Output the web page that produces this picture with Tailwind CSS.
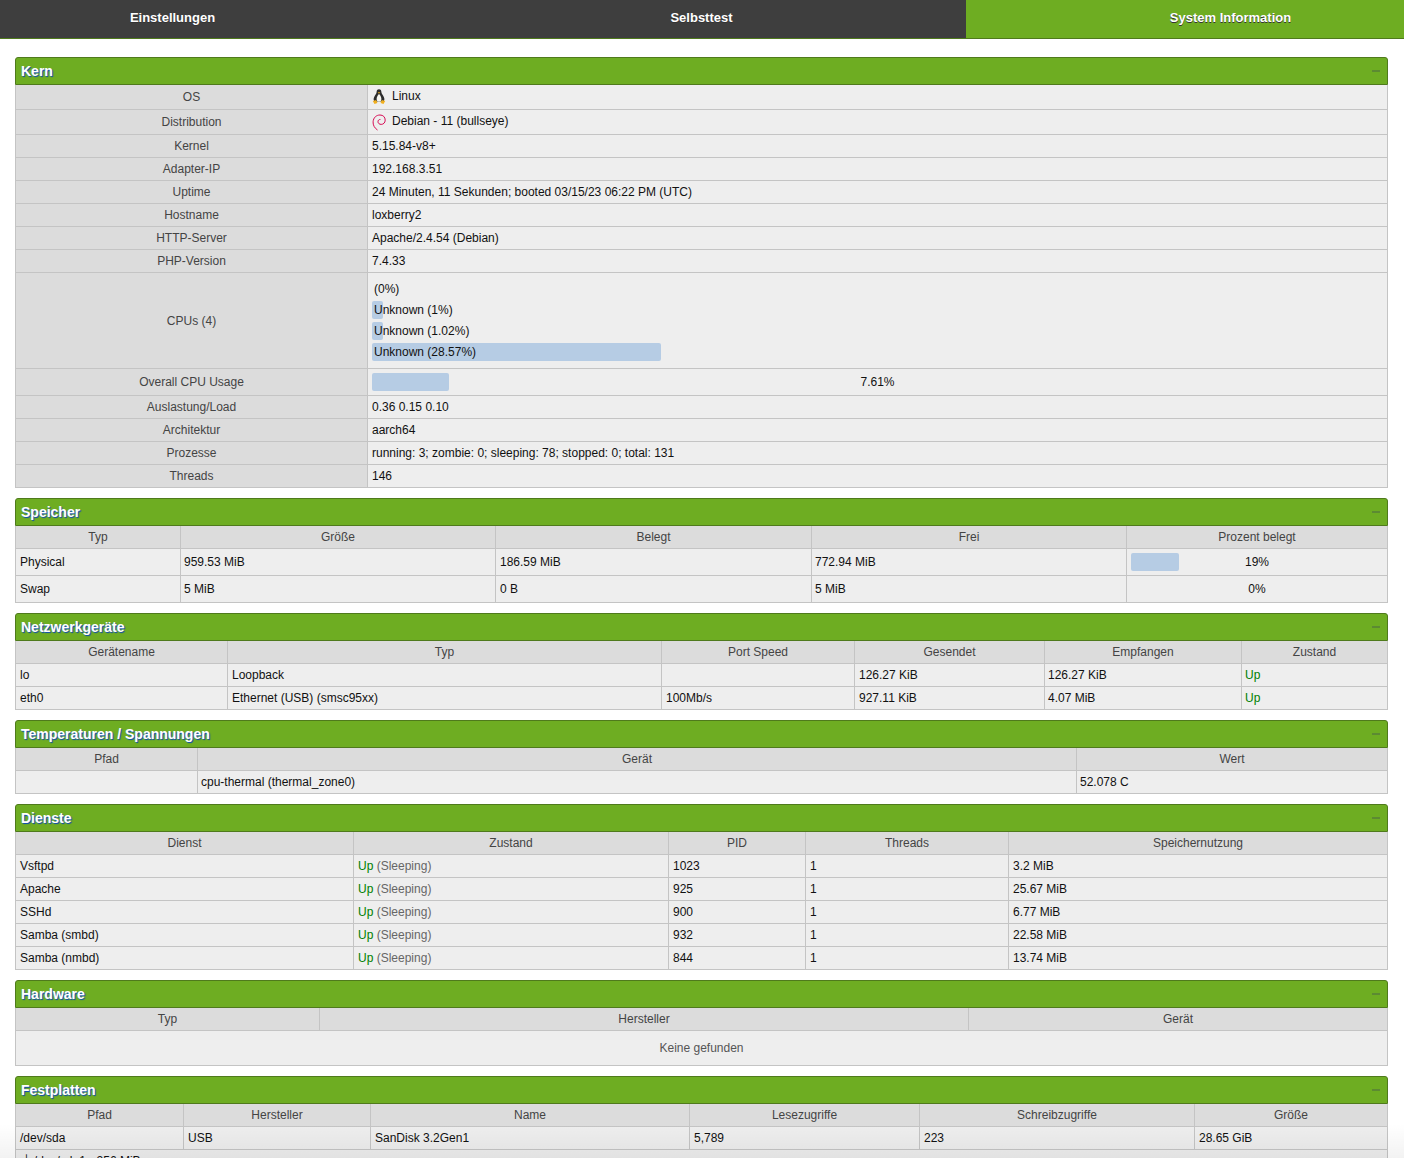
<!doctype html>
<html><head><meta charset="utf-8"><script src="https://cdn.jsdelivr.net/npm/@tailwindcss/browser@4"></script></head>
<body class="bg-white font-['Liberation_Sans',Arial,sans-serif] text-[12px] text-[#111] overflow-hidden">
<div class="relative h-[1158px] overflow-hidden">
<nav class="flex ml-[-92px] w-[1587px] h-[39px] border-b border-[#4f7a1c] text-white text-[13px] font-bold [text-shadow:0_1px_0_#333]">
<div class="w-[529px] bg-[#3e3e3e] text-center leading-[36px]">Einstellungen</div>
<div class="w-[529px] bg-[#3e3e3e] text-center leading-[36px]">Selbsttest</div>
<div class="w-[529px] bg-[#6ead22] text-center leading-[36px]">System Information</div>
</nav>
<main class="pl-[15px] pr-[16px] pt-[18px] flex flex-col gap-[10px]">

<section>
<div class="flex justify-between items-center h-[28px] bg-[#6ead22] border border-[#4f7a1c] rounded-t-[3px] pl-[5px] pr-[7px] font-bold text-[14px] text-white [text-shadow:1px_1px_1px_#0a47b8]"><span>Kern</span><span class="w-[8px] h-[2px] bg-[#5c8a32]"></span></div>
<table class="w-full table-fixed border-collapse border border-[#c4c4c4] border-t-0 [&_th]:font-normal [&_th]:text-[#444] [&_th]:bg-[#dcdcdc] [&_th]:border [&_th]:border-[#c4c4c4] [&_th]:p-0 [&_td]:bg-[#eeeeee] [&_td]:border [&_td]:border-[#c4c4c4] [&_td]:px-[4px] [&_td]:py-0">
<colgroup><col class="w-[352px]"><col></colgroup>
<tbody>
<tr class="h-[24px]"><th class="border-t-0!">OS</th><td class="border-t-0!"><span class="flex items-center gap-[6px]"><svg width="14" height="15" viewBox="0 0 14 15"><path d="M7 .3c1.700 0 2.400 1.300 2.400 2.900 0 1.700 3 4.200 3 6.800 0 1.200-.5 2-1.200 2.500H2.800C2.100 12 1.600 11.200 1.600 10c0-2.600 3-5.100 3-6.800C4.600 1.600 5.300.3 7 .3z" fill="#2c2c2c"/><path d="M7 5c.9.400 2.400 3 2.400 5 0 1.600-.8 2.600-2.400 2.600S4.600 11.600 4.600 10c0-2 1.500-4.600 2.400-5z" fill="#f6f6f0"/><path d="M.8 12.100l3.400-1 1.200 2.900-2.900.9zM13.200 12.100l-3.400-1-1.200 2.900 2.900.9zM5.700 3.300h2.600L7 4.800z" fill="#f2b01e"/></svg><span class="-translate-y-[1px]">Linux</span></span></td></tr>
<tr class="h-[25px]"><th>Distribution</th><td><span class="flex items-center gap-[6px]"><svg width="14" height="17" viewBox="0 0 14 17" fill="none" stroke="#d70a53" stroke-width="1" class="translate-y-[1px]"><path d="M5.500 16C2.400 14 .9 11 1.100 7.800 1.400 3.500 4.400 1 8 1c3.200 0 5.200 2.200 5.200 5.100 0 2.700-1.900 4.300-4 4.300C7.400 10.400 6 9.300 6 7.700 6 6.300 7 5.300 8.400 5.500"/></svg><span class="-translate-y-[1px]">Debian - 11 (bullseye)</span></span></td></tr>
<tr class="h-[23px]"><th>Kernel</th><td>5.15.84-v8+</td></tr>
<tr class="h-[23px]"><th>Adapter-IP</th><td>192.168.3.51</td></tr>
<tr class="h-[23px]"><th>Uptime</th><td>24 Minuten, 11 Sekunden; booted 03/15/23 06:22 PM (UTC)</td></tr>
<tr class="h-[23px]"><th>Hostname</th><td>loxberry2</td></tr>
<tr class="h-[23px]"><th>HTTP-Server</th><td>Apache/2.4.54 (Debian)</td></tr>
<tr class="h-[23px]"><th>PHP-Version</th><td>7.4.33</td></tr>
<tr class="h-[96px]"><th class="pt-[1px]!">CPUs (4)</th><td>
<div class="flex flex-col gap-[3px]">
<div class="h-[18px] leading-[18px] pl-[2px]">(0%)</div>
<div class="relative h-[18px] leading-[18px] pl-[2px]"><div class="absolute left-0 top-0 h-full w-[11px] bg-[#b6cce4] rounded-[2px]"></div><span class="relative">Unknown (1%)</span></div>
<div class="relative h-[18px] leading-[18px] pl-[2px]"><div class="absolute left-0 top-0 h-full w-[11px] bg-[#b6cce4] rounded-[2px]"></div><span class="relative">Unknown (1.02%)</span></div>
<div class="relative h-[18px] leading-[18px] pl-[2px]"><div class="absolute left-0 top-0 h-full w-[289px] bg-[#b6cce4] rounded-[2px]"></div><span class="relative">Unknown (28.57%)</span></div>
</div></td></tr>
<tr class="h-[27px]"><th>Overall CPU Usage</th><td><div class="relative h-[18px] w-[1011px] text-center leading-[18px]"><div class="absolute left-0 top-0 h-full w-[77px] bg-[#b6cce4] rounded-[2px]"></div><span class="relative">7.61%</span></div></td></tr>
<tr class="h-[23px]"><th>Auslastung/Load</th><td>0.36 0.15 0.10</td></tr>
<tr class="h-[23px]"><th>Architektur</th><td>aarch64</td></tr>
<tr class="h-[23px]"><th>Prozesse</th><td>running: 3; zombie: 0; sleeping: 78; stopped: 0; total: 131</td></tr>
<tr class="h-[23px]"><th>Threads</th><td>146</td></tr>
</tbody></table>
</section>

<section>
<div class="flex justify-between items-center h-[28px] bg-[#6ead22] border border-[#4f7a1c] rounded-t-[3px] pl-[5px] pr-[7px] font-bold text-[14px] text-white [text-shadow:1px_1px_1px_#0a47b8]"><span class="translate-y-[1px]">Speicher</span><span class="w-[8px] h-[2px] bg-[#5c8a32]"></span></div>
<table class="w-full table-fixed border-collapse border border-[#c4c4c4] border-t-0 [&_th]:font-normal [&_th]:text-[#444] [&_th]:bg-[#dcdcdc] [&_th]:border [&_th]:border-[#c4c4c4] [&_th]:border-t-0 [&_th]:p-0 [&_td]:bg-[#eeeeee] [&_td]:border [&_td]:border-[#c4c4c4] [&_td]:px-[4px] [&_td]:py-0">
<colgroup><col class="w-[165px]"><col class="w-[315px]"><col class="w-[316px]"><col class="w-[315px]"><col></colgroup>
<thead><tr class="h-[23px]"><th>Typ</th><th>Größe</th><th>Belegt</th><th>Frei</th><th>Prozent belegt</th></tr></thead>
<tbody>
<tr class="h-[27px]"><td>Physical</td><td class="pl-[3px]!">959.53 MiB</td><td>186.59 MiB</td><td class="pl-[3px]!">772.94 MiB</td><td><div class="relative h-[18px] text-center leading-[18px]"><div class="absolute left-0 top-0 h-full w-[48px] bg-[#b6cce4] rounded-[2px]"></div><span class="relative">19%</span></div></td></tr>
<tr class="h-[27px]"><td>Swap</td><td class="pl-[3px]!">5 MiB</td><td>0 B</td><td class="pl-[3px]!">5 MiB</td><td class="text-center">0%</td></tr>
</tbody></table>
</section>

<section>
<div class="flex justify-between items-center h-[28px] bg-[#6ead22] border border-[#4f7a1c] rounded-t-[3px] pl-[5px] pr-[7px] font-bold text-[14px] text-white [text-shadow:1px_1px_1px_#0a47b8]"><span>Netzwerkgeräte</span><span class="w-[8px] h-[2px] bg-[#5c8a32]"></span></div>
<table class="w-full table-fixed border-collapse border border-[#c4c4c4] border-t-0 [&_th]:font-normal [&_th]:text-[#444] [&_th]:bg-[#dcdcdc] [&_th]:border [&_th]:border-[#c4c4c4] [&_th]:border-t-0 [&_th]:p-0 [&_td]:bg-[#eeeeee] [&_td]:border [&_td]:border-[#c4c4c4] [&_td]:px-[4px] [&_td]:py-0">
<colgroup><col class="w-[212px]"><col class="w-[434px]"><col class="w-[193px]"><col class="w-[190px]"><col class="w-[197px]"><col></colgroup>
<thead><tr class="h-[22px]"><th>Gerätename</th><th>Typ</th><th>Port Speed</th><th>Gesendet</th><th>Empfangen</th><th>Zustand</th></tr></thead>
<tbody>
<tr class="h-[23px]"><td>lo</td><td>Loopback</td><td></td><td>126.27 KiB</td><td class="pl-[3px]!">126.27 KiB</td><td class="text-[#008000] pl-[3px]!">Up</td></tr>
<tr class="h-[23px]"><td>eth0</td><td>Ethernet (USB) (smsc95xx)</td><td>100Mb/s</td><td>927.11 KiB</td><td class="pl-[3px]!">4.07 MiB</td><td class="text-[#008000] pl-[3px]!">Up</td></tr>
</tbody></table>
</section>

<section>
<div class="flex justify-between items-center h-[28px] bg-[#6ead22] border border-[#4f7a1c] rounded-t-[3px] pl-[5px] pr-[7px] font-bold text-[14px] text-white [text-shadow:1px_1px_1px_#0a47b8]"><span class="translate-y-[1px]">Temperaturen / Spannungen</span><span class="w-[8px] h-[2px] bg-[#5c8a32]"></span></div>
<table class="w-full table-fixed border-collapse border border-[#c4c4c4] border-t-0 [&_th]:font-normal [&_th]:text-[#444] [&_th]:bg-[#dcdcdc] [&_th]:border [&_th]:border-[#c4c4c4] [&_th]:border-t-0 [&_th]:p-0 [&_td]:bg-[#eeeeee] [&_td]:border [&_td]:border-[#c4c4c4] [&_td]:px-[4px] [&_td]:py-0">
<colgroup><col class="w-[182px]"><col class="w-[879px]"><col></colgroup>
<thead><tr class="h-[23px]"><th>Pfad</th><th>Gerät</th><th>Wert</th></tr></thead>
<tbody>
<tr class="h-[23px]"><td></td><td class="pl-[3px]!">cpu-thermal (thermal_zone0)</td><td class="pl-[3px]!">52.078 C</td></tr>
</tbody></table>
</section>

<section>
<div class="flex justify-between items-center h-[28px] bg-[#6ead22] border border-[#4f7a1c] rounded-t-[3px] pl-[5px] pr-[7px] font-bold text-[14px] text-white [text-shadow:1px_1px_1px_#0a47b8]"><span>Dienste</span><span class="w-[8px] h-[2px] bg-[#5c8a32]"></span></div>
<table class="w-full table-fixed border-collapse border border-[#c4c4c4] border-t-0 [&_th]:font-normal [&_th]:text-[#444] [&_th]:bg-[#dcdcdc] [&_th]:border [&_th]:border-[#c4c4c4] [&_th]:border-t-0 [&_th]:p-0 [&_td]:bg-[#eeeeee] [&_td]:border [&_td]:border-[#c4c4c4] [&_td]:px-[4px] [&_td]:py-0">
<colgroup><col class="w-[338px]"><col class="w-[315px]"><col class="w-[137px]"><col class="w-[203px]"><col></colgroup>
<thead><tr class="h-[22px]"><th>Dienst</th><th>Zustand</th><th>PID</th><th>Threads</th><th>Speichernutzung</th></tr></thead>
<tbody>
<tr class="h-[23px]"><td>Vsftpd</td><td class="text-[#666]"><span class="text-[#008000]">Up</span> (Sleeping)</td><td>1023</td><td>1</td><td>3.2 MiB</td></tr>
<tr class="h-[23px]"><td>Apache</td><td class="text-[#666]"><span class="text-[#008000]">Up</span> (Sleeping)</td><td>925</td><td>1</td><td>25.67 MiB</td></tr>
<tr class="h-[23px]"><td>SSHd</td><td class="text-[#666]"><span class="text-[#008000]">Up</span> (Sleeping)</td><td>900</td><td>1</td><td>6.77 MiB</td></tr>
<tr class="h-[23px]"><td>Samba (smbd)</td><td class="text-[#666]"><span class="text-[#008000]">Up</span> (Sleeping)</td><td>932</td><td>1</td><td>22.58 MiB</td></tr>
<tr class="h-[23px]"><td>Samba (nmbd)</td><td class="text-[#666]"><span class="text-[#008000]">Up</span> (Sleeping)</td><td>844</td><td>1</td><td>13.74 MiB</td></tr>
</tbody></table>
</section>

<section>
<div class="flex justify-between items-center h-[28px] bg-[#6ead22] border border-[#4f7a1c] rounded-t-[3px] pl-[5px] pr-[7px] font-bold text-[14px] text-white [text-shadow:1px_1px_1px_#0a47b8]"><span class="translate-y-[1px]">Hardware</span><span class="w-[8px] h-[2px] bg-[#5c8a32]"></span></div>
<table class="w-full table-fixed border-collapse border border-[#c4c4c4] border-t-0 [&_th]:font-normal [&_th]:text-[#444] [&_th]:bg-[#dcdcdc] [&_th]:border [&_th]:border-[#c4c4c4] [&_th]:border-t-0 [&_th]:p-0 [&_td]:bg-[#eeeeee] [&_td]:border [&_td]:border-[#c4c4c4] [&_td]:px-[4px] [&_td]:py-0">
<colgroup><col class="w-[304px]"><col class="w-[649px]"><col></colgroup>
<thead><tr class="h-[23px]"><th>Typ</th><th>Hersteller</th><th>Gerät</th></tr></thead>
<tbody>
<tr class="h-[35px]"><td colspan="3" class="text-center text-[#555]">Keine gefunden</td></tr>
</tbody></table>
</section>

<section>
<div class="flex justify-between items-center h-[28px] bg-[#6ead22] border border-[#4f7a1c] rounded-t-[3px] pl-[5px] pr-[7px] font-bold text-[14px] text-white [text-shadow:1px_1px_1px_#0a47b8]"><span>Festplatten</span><span class="w-[8px] h-[2px] bg-[#5c8a32]"></span></div>
<table class="w-full table-fixed border-collapse border border-[#c4c4c4] border-t-0 [&_th]:font-normal [&_th]:text-[#444] [&_th]:bg-[#dcdcdc] [&_th]:border [&_th]:border-[#c4c4c4] [&_th]:border-t-0 [&_th]:p-0 [&_td]:bg-[#eeeeee] [&_td]:border [&_td]:border-[#c4c4c4] [&_td]:px-[4px] [&_td]:py-0">
<colgroup><col class="w-[168px]"><col class="w-[187px]"><col class="w-[319px]"><col class="w-[230px]"><col class="w-[275px]"><col></colgroup>
<thead><tr class="h-[22px]"><th>Pfad</th><th>Hersteller</th><th>Name</th><th>Lesezugriffe</th><th>Schreibzugriffe</th><th>Größe</th></tr></thead>
<tbody>
<tr class="h-[23px]"><td>/dev/sda</td><td>USB</td><td>SanDisk 3.2Gen1</td><td>5,789</td><td>223</td><td>28.65 GiB</td></tr>
<tr class="h-[23px]"><td colspan="6" class="pl-[6px]!">└ /dev/sda1 - 256 MiB</td></tr>
</tbody></table>
</section>

</main>
<div class="absolute inset-x-0 bottom-0 h-[34px] pointer-events-none bg-gradient-to-t from-black/5 to-transparent"></div>
</div></body></html>
